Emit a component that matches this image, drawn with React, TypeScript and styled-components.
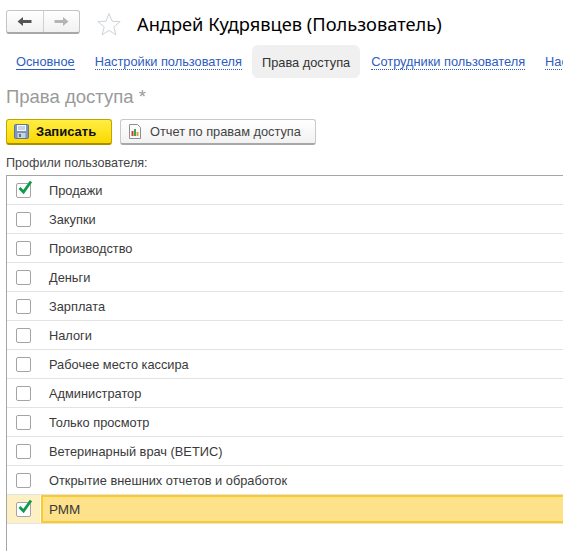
import React from 'react';
import styled, { createGlobalStyle } from 'styled-components';

const GlobalStyle = createGlobalStyle`
  html, body {
    margin: 0;
    padding: 0;
    background: #fff;
    overflow: hidden;
  }
`;

const Page = styled.div`
  width: 563px;
  height: 551px;
  overflow: hidden;
  font-family: 'Liberation Sans', Arial, sans-serif;
  font-size: 12.8px;
  color: #333;
  display: flex;
  flex-direction: column;
`;

const Header = styled.div`
  display: flex;
  align-items: center;
  height: 24px;
  padding: 10px 0 0 6px;
`;

const NavGroup = styled.div`
  display: flex;
  width: 74px;
  height: 24px;
  box-sizing: border-box;
  border: 1px solid #c4c4c4;
  border-bottom: 2px solid #a8a8a8;
  border-radius: 3px;
  background: linear-gradient(#ffffff, #f1f1f1);
`;

const NavButton = styled.div<{ $divider?: boolean }>`
  flex: 1;
  display: flex;
  align-items: center;
  justify-content: center;
  ${(p) => (p.$divider ? 'border-right: 1px solid #d0d0d0;' : '')}
`;

const StarWrap = styled.div`
  display: flex;
  margin-left: 17px;
  margin-top: 3px;
`;

const Title = styled.h1`
  margin: 2px 0 0 16px;
  font-size: 18.25px;
  font-weight: 400;
  color: #000;
  white-space: nowrap;
  font-family: 'Noto Sans', 'Liberation Sans', sans-serif;
`;

const Tabs = styled.div`
  display: flex;
  align-items: center;
  height: 33px;
  margin-top: 11px;
  padding-left: 6px;
  white-space: nowrap;
`;

const Tab = styled.div<{ $active?: boolean }>`
  height: 33px;
  display: flex;
  align-items: center;
  padding: 0 10px;
  border-radius: 6px;
  color: ${(p) => (p.$active ? '#333' : '#2d5dc0')};
  background: ${(p) => (p.$active ? '#f0f0f0' : 'transparent')};
  margin-right: ${(p) => (p.$active ? '1px' : '0')};
`;

const TabLabel = styled.span<{ $solid?: boolean; $dotted?: boolean }>`
  line-height: 15px;
  margin-top: 1px;
  ${(p) => (p.$solid ? 'border-bottom: 1px solid #2d5dc0;' : '')}
  ${(p) => (p.$dotted ? 'border-bottom: 1px dotted #2d5dc0;' : '')}
`;

const FormTitle = styled.div`
  margin: 8px 0 0 6px;
  font-size: 18.5px;
  line-height: 21px;
  color: #9a9a9a;
`;

const Commands = styled.div`
  display: flex;
  gap: 8px;
  margin: 12px 0 0 6px;
`;

const Button = styled.div<{ $primary?: boolean }>`
  height: 26px;
  box-sizing: border-box;
  display: flex;
  align-items: center;
  border-radius: 3px;
  ${(p) =>
    p.$primary
      ? `
    width: 106px;
    padding-left: 7px;
    gap: 7px;
    border: 1px solid #c2a400;
    border-bottom: 2px solid #a98f00;
    background: linear-gradient(#ffee44, #fbd800);
    color: #111;
    font-size: 13px;
    font-weight: 700;
  `
      : `
    width: 196px;
    padding-left: 7px;
    gap: 8px;
    border: 1px solid #c8c8c8;
    border-bottom: 2px solid #a8a8a8;
    background: linear-gradient(#ffffff, #f2f2f2);
    color: #444;
  `}
`;

const ListLabel = styled.div`
  margin: 11px 0 0 6px;
  font-size: 12.6px;
  line-height: 14px;
  color: #444;
`;

const Table = styled.div`
  flex: 1;
  margin: 5px 0 0 6px;
  border-left: 1px solid #a6a6a6;
  border-top: 1px solid #a6a6a6;
`;

const Row = styled.div`
  display: flex;
  height: 29px;
  box-sizing: border-box;
  border-bottom: 1px solid #e3e3e3;
`;

const CheckCell = styled.div<{ $selected?: boolean }>`
  width: 33px;
  margin-right: 1px;
  flex: none;
  display: flex;
  align-items: center;
  padding-left: 9px;
  box-sizing: border-box;
  background: ${(p) => (p.$selected ? '#fdf0c4' : 'transparent')};
`;

const NameCell = styled.div<{ $selected?: boolean }>`
  flex: 1;
  display: flex;
  align-items: center;
  box-sizing: border-box;
  padding-left: ${(p) => (p.$selected ? '6px' : '8px')};
  color: #3a3a3a;
  ${(p) =>
    p.$selected
      ? `
    background: #fde28b;
    border: 2px solid #fccb27;
    border-right: none;
    font-size: 13.5px;
  `
      : ''}
`;

const Box = styled.div`
  position: relative;
  width: 15px;
  height: 15px;
  box-sizing: border-box;
  border: 1px solid #a4a4a4;
  border-radius: 2px;
  background: #fff;
`;

const Tick = styled.svg`
  position: absolute;
  left: 1px;
  top: -5px;
`;

const Arrow = ({ dir, color }: { dir: 'left' | 'right'; color: string }) => (
  <svg width="15" height="11" viewBox="0 0 15 11">
    <path
      d={dir === 'left' ? 'M0.5 5.5 6 1v3h8.5v3H6v3z' : 'M14.5 5.5 9 1v3H0.5v3H9v3z'}
      fill={color}
    />
  </svg>
);

const Star = () => (
  <svg width="24" height="24" viewBox="0 0 24 24">
    <path
      d="M12 1.5l3 7.7 8.2.5-6.4 5.2 2.1 8L12 18.4l-6.9 4.5 2.1-8L.8 9.7 9 9.2z"
      fill="#fff"
      stroke="#cdd3d8"
      strokeWidth="1"
    />
  </svg>
);

const SaveIcon = () => (
  <svg width="15" height="15" viewBox="0 0 15 15">
    <rect x="0.5" y="0.5" width="14" height="14" rx="1" fill="#7f97b8" stroke="#5f7694" />
    <rect x="3" y="1" width="9" height="6" fill="#f4f6f8" />
    <rect x="4" y="2.5" width="7" height="1" fill="#9fb0c6" />
    <rect x="4" y="4.5" width="7" height="1" fill="#9fb0c6" />
    <rect x="3.5" y="9" width="8" height="5" fill="#c9d2dd" />
    <rect x="5" y="10" width="2" height="3" fill="#5f7694" />
  </svg>
);

const ReportIcon = () => (
  <svg width="14" height="15" viewBox="0 0 14 15">
    <path d="M1.5.5h8l3 3v11h-11z" fill="#fbfbfb" stroke="#8f8f8f" />
    <rect x="3.5" y="7" width="2" height="5" fill="#d0402f" />
    <rect x="6" y="5" width="2" height="7" fill="#3aa655" />
    <rect x="8.5" y="8" width="2" height="4" fill="#e0a52a" />
  </svg>
);

const CheckMark = () => (
  <Tick width="15" height="16" viewBox="0 0 15 16">
    <path d="M1.5 9 L5.5 13 L13 2.5" fill="none" stroke="#109a4c" strokeWidth="2.8" />
  </Tick>
);

const profiles = [
  { name: 'Продажи', checked: true },
  { name: 'Закупки' },
  { name: 'Производство' },
  { name: 'Деньги' },
  { name: 'Зарплата' },
  { name: 'Налоги' },
  { name: 'Рабочее место кассира' },
  { name: 'Администратор' },
  { name: 'Только просмотр' },
  { name: 'Ветеринарный врач (ВЕТИС)' },
  { name: 'Открытие внешних отчетов и обработок' },
  { name: 'РММ', checked: true, selected: true },
];

const App = () => (
  <Page>
    <GlobalStyle />
    <Header>
      <NavGroup>
        <NavButton $divider>
          <Arrow dir="left" color="#555" />
        </NavButton>
        <NavButton>
          <Arrow dir="right" color="#b5b5b5" />
        </NavButton>
      </NavGroup>
      <StarWrap>
        <Star />
      </StarWrap>
      <Title>Андрей Кудрявцев (Пользователь)</Title>
    </Header>
    <Tabs>
      <Tab>
        <TabLabel $solid>Основное</TabLabel>
      </Tab>
      <Tab>
        <TabLabel $dotted>Настройки пользователя</TabLabel>
      </Tab>
      <Tab $active>
        <TabLabel>Права доступа</TabLabel>
      </Tab>
      <Tab>
        <TabLabel $dotted>Сотрудники пользователя</TabLabel>
      </Tab>
      <Tab>
        <TabLabel $dotted>Настройки</TabLabel>
      </Tab>
    </Tabs>
    <FormTitle>Права доступа *</FormTitle>
    <Commands>
      <Button $primary>
        <SaveIcon />
        Записать
      </Button>
      <Button>
        <ReportIcon />
        Отчет по правам доступа
      </Button>
    </Commands>
    <ListLabel>Профили пользователя:</ListLabel>
    <Table>
      {profiles.map((p) => (
        <Row key={p.name}>
          <CheckCell $selected={p.selected}>
            <Box>{p.checked && <CheckMark />}</Box>
          </CheckCell>
          <NameCell $selected={p.selected}>{p.name}</NameCell>
        </Row>
      ))}
    </Table>
  </Page>
);

export default App;
